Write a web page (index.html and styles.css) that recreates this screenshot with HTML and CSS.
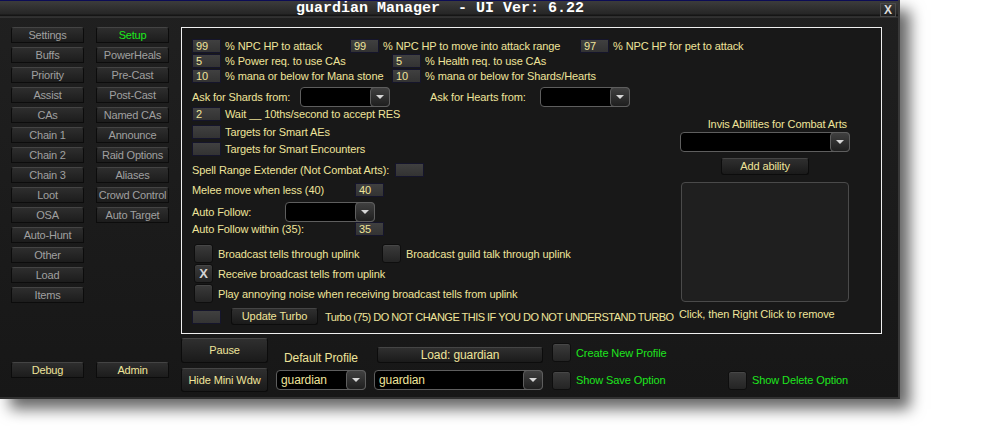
FILE: index.html
```html
<!DOCTYPE html>
<html lang="en">
<head>
    <meta charset="UTF-8">
    <title>guardian Manager</title>
    <link rel="stylesheet" href="styles.css">
</head>
<body>

    <div class="window">
        <!-- Title bar -->
        <div class="titlebar">
            <span class="title">guardian Manager  - UI Ver: 6.22</span>
            <span class="close">X</span>
        </div>

        <div class="window-body">
            <!-- Tabs -->
            <div class="sidebar">
                <div class="nav">
                    <a class="tab">Settings</a>
                    <a class="tab">Buffs</a>
                    <a class="tab">Priority</a>
                    <a class="tab">Assist</a>
                    <a class="tab">CAs</a>
                    <a class="tab">Chain 1</a>
                    <a class="tab">Chain 2</a>
                    <a class="tab">Chain 3</a>
                    <a class="tab">Loot</a>
                    <a class="tab">OSA</a>
                    <a class="tab">Auto-Hunt</a>
                    <a class="tab">Other</a>
                    <a class="tab">Load</a>
                    <a class="tab">Items</a>
                    <a class="tab active">Setup</a>
                    <a class="tab">PowerHeals</a>
                    <a class="tab">Pre-Cast</a>
                    <a class="tab">Post-Cast</a>
                    <a class="tab">Named CAs</a>
                    <a class="tab">Announce</a>
                    <a class="tab">Raid Options</a>
                    <a class="tab">Aliases</a>
                    <a class="tab">Crowd Control</a>
                    <a class="tab">Auto Target</a>
                </div>
                <div class="nav nav-bottom">
                    <a class="tab gold">Debug</a>
                    <a class="tab gold">Admin</a>
                </div>
            </div>

            <div class="main">
                <!-- Setup panel -->
                <div class="panel">
                    <div class="row full">
                        <div class="group g-first"><span class="num">99</span>% NPC HP to attack</div>
                        <div class="group g-second"><span class="num">99</span>% NPC HP to move into attack range</div>
                        <div class="group"><span class="num">97</span>% NPC HP for pet to attack</div>
                    </div>
                    <div class="row full">
                        <div class="group g-half"><span class="num">5</span>% Power req. to use CAs</div>
                        <div class="group"><span class="num">5</span>% Health req. to use CAs</div>
                    </div>
                    <div class="row full">
                        <div class="group g-half"><span class="num">10</span>% mana or below for Mana stone</div>
                        <div class="group"><span class="num">10</span>% mana or below for Shards/Hearts</div>
                    </div>
                    <div class="row full">
                        <span class="label l-shards">Ask for Shards from:</span>
                        <div class="select"><span class="value"></span><span class="arrow"></span></div>
                        <span class="label l-hearts">Ask for Hearts from:</span>
                        <div class="select"><span class="value"></span><span class="arrow"></span></div>
                    </div>
                    <div class="row"><span class="num">2</span>Wait __ 10ths/second to accept RES</div>
                    <div class="row"><span class="num"></span>Targets for Smart AEs</div>
                    <div class="row"><span class="num"></span>Targets for Smart Encounters</div>
                    <div class="row"><span class="label l-spell">Spell Range Extender (Not Combat Arts):</span><span class="num"></span></div>
                    <div class="row"><span class="label l-melee">Melee move when less (40)</span><span class="num">40</span></div>
                    <div class="row">
                        <span class="label l-follow">Auto Follow:</span>
                        <div class="select"><span class="value"></span><span class="arrow"></span></div>
                    </div>
                    <div class="row"><span class="label l-melee">Auto Follow within (35):</span><span class="num">35</span></div>
                    <div class="row checks">
                        <div class="group g-check"><span class="check"></span>Broadcast tells through uplink</div>
                        <div class="group"><span class="check"></span>Broadcast guild talk through uplink</div>
                    </div>
                    <div class="row checks"><span class="check">X</span>Receive broadcast tells from uplink</div>
                    <div class="row checks"><span class="check"></span>Play annoying noise when receiving broadcast tells from uplink</div>
                    <div class="row">
                        <span class="num"></span>
                        <span class="btn turbo-btn">Update Turbo</span>
                        <span class="turbo-text">Turbo (75) DO NOT CHANGE THIS IF YOU DO NOT UNDERSTAND TURBO</span>
                    </div>

                    <!-- Invis abilities -->
                    <div class="side">
                        <div class="side-label">Invis Abilities for Combat Arts</div>
                        <div class="select wide"><span class="value"></span><span class="arrow"></span></div>
                        <span class="btn add-btn">Add ability</span>
                        <div class="listbox"></div>
                        <div class="side-note">Click, then Right Click to remove</div>
                    </div>
                </div>

                <!-- Profile controls -->
                <div class="profile">
                    <span class="btn big">Pause</span>
                    <span class="profile-label">Default Profile</span>
                    <span class="btn load-btn">Load: guardian</span>
                    <div class="option opt-top"><span class="check"></span>Create New Profile</div>
                    <span></span>

                    <span class="btn big">Hide Mini Wdw</span>
                    <div class="select"><span class="value">guardian</span><span class="arrow"></span></div>
                    <div class="select"><span class="value">guardian</span><span class="arrow"></span></div>
                    <div class="option"><span class="check"></span>Show Save Option</div>
                    <div class="option"><span class="check"></span>Show Delete Option</div>
                </div>
            </div>
        </div>
    </div>

</body>
</html>
```

FILE: styles.css
```css
* {
    box-sizing: border-box;
}

html, body {
    background: #ffffff;
}

body {
    margin: 0;
    height: 440px;
    font-family: 'Liberation Sans', Arial, sans-serif;
    font-size: 11px;
    letter-spacing: -0.1px;
}

/* Window frame */
.window {
    position: relative;
    width: 900px;
    height: 399px;
    display: flex;
    flex-direction: column;
    background: linear-gradient(to bottom, #202020, #171717);
    border-right: 2px solid #383838;
    border-bottom: 2px solid #303030;
    box-shadow: 10px 10px 14px rgba(0, 0, 0, 0.6);
}

.titlebar {
    height: 18px;
    display: flex;
    align-items: flex-start;
    border-top: 1px solid #0c0c55;
    background: linear-gradient(to bottom, #3c3c3c 0px, #262626 13px, #151515 14px, #151515 15px, #474747 16px, #1c1c1c 17px);
}

.title {
    flex: 1;
    text-align: center;
    color: #ffffff;
    font-family: 'Liberation Mono', monospace;
    font-weight: bold;
    font-size: 15px;
    line-height: 15px;
    letter-spacing: 0;
    white-space: pre;
}

.close {
    width: 16px;
    height: 14px;
    margin: 2px 2px 0 0;
    border: 1px solid #4a4a4a;
    background: linear-gradient(to bottom, #3a3a3a, #1e1e1e);
    color: #dcdcdc;
    font-size: 12px;
    font-weight: bold;
    line-height: 12px;
    text-align: center;
    letter-spacing: 0;
}

.window-body {
    flex: 1;
    display: flex;
    gap: 12px;
    padding: 9px 16px 0 11px;
}

/* Tabs */
.sidebar {
    width: 158px;
    display: flex;
    flex-direction: column;
}

.nav {
    display: grid;
    grid-template-columns: 73px 73px;
    grid-template-rows: repeat(14, 16px);
    grid-auto-flow: column;
    column-gap: 12px;
    row-gap: 4px;
}

.nav-bottom {
    grid-template-rows: 16px;
    margin-top: auto;
    margin-bottom: 19px;
}

.tab {
    height: 16px;
    line-height: 15px;
    text-align: center;
    color: #a0a0a0;
    background: linear-gradient(to bottom, #2e2e2e, #1c1c1c);
    border: 1px solid #0c0c0c;
    border-top-color: #444444;
    border-radius: 3px 3px 0 0;
    white-space: nowrap;
    letter-spacing: -0.2px;
}

.tab.active {
    color: #1cea1c;
}

.tab.gold {
    color: #efe49a;
}

/* Main panel */
.main {
    width: 701px;
}

.panel {
    height: 307px;
    border: 1px solid #f0f0f0;
    padding: 11px 31px 0 10px;
    display: grid;
    grid-template-columns: 488px 170px;
    grid-template-rows: 14px 15px 15px 24px 14px 18px 17px 21px 20px 25px 14px 27px 20px 20px 22px;
    align-items: end;
    color: #efe49a;
    background: #181818;
}

.row {
    grid-column: 1;
    display: flex;
    align-items: center;
    white-space: nowrap;
}

.row.full {
    grid-column: 1 / -1;
}

.row.checks {
    padding-left: 2px;
}

.group {
    display: flex;
    align-items: center;
    flex: none;
}

.g-first { width: 158px; }
.g-second { width: 230px; }
.g-half { width: 200px; }
.g-check { width: 188px; }

.label {
    flex: none;
}

.l-shards { width: 108px; }
.l-hearts { width: 110px; margin-left: 40px; }
.l-spell { width: 203px; }
.l-melee { width: 163px; }
.l-follow { width: 93px; }

.num {
    flex: none;
    width: 29px;
    height: 14px;
    margin-right: 4px;
    padding-left: 3px;
    line-height: 12px;
    color: #efe49a;
    background: linear-gradient(to bottom, #404040, #333333);
    border: 1px solid #15152b;
}

.select {
    flex: none;
    width: 90px;
    height: 20px;
    display: flex;
    background: #000000;
    border: 1px solid #5e5e5e;
    border-radius: 4px;
    color: #efe49a;
}

.select .value {
    flex: 1;
    padding-left: 4px;
    line-height: 18px;
    font-size: 12px;
}

.select .arrow {
    width: 20px;
    margin: -1px -1px -1px 0;
    display: flex;
    align-items: center;
    justify-content: center;
    background: linear-gradient(to bottom, #404040, #1f1f1f);
    border: 1px solid #5e5e5e;
    border-radius: 4px;
}

.select .arrow::after {
    content: "";
    border-left: 4px solid transparent;
    border-right: 4px solid transparent;
    border-top: 4px solid #d6d6d6;
}

.check {
    flex: none;
    width: 19px;
    height: 19px;
    margin-right: 5px;
    border: 1px solid #0e0e0e;
    border-radius: 3px;
    background: linear-gradient(to bottom, #3b3b3b, #242424);
    box-shadow: inset 0 1px #474747;
    color: #d4d4d4;
    font-size: 13px;
    font-weight: bold;
    line-height: 17px;
    text-align: center;
}

.btn {
    display: block;
    text-align: center;
    color: #efe49a;
    background: linear-gradient(to bottom, #2f2f2f, #1a1a1a);
    border: 1px solid #0c0c0c;
    border-top-color: #454545;
    border-radius: 3px;
    white-space: nowrap;
}

.turbo-btn {
    width: 87px;
    height: 17px;
    line-height: 15px;
    margin-left: 6px;
}

.turbo-text {
    margin-left: 7px;
    letter-spacing: -0.52px;
}

/* Invis abilities column */
.side {
    grid-column: 2;
    grid-row: 5 / 16;
    align-self: start;
    display: flex;
    flex-direction: column;
}

.side-label {
    margin-top: 11px;
    padding-right: 3px;
    line-height: 12px;
    text-align: right;
}

.select.wide {
    width: 170px;
    margin-top: 2px;
}

.add-btn {
    width: 88px;
    height: 17px;
    line-height: 15px;
    margin: 6px auto 0;
}

.listbox {
    height: 120px;
    margin: 7px 1px 0;
    border: 1px solid #4a4a4a;
    border-radius: 4px;
    background: #1f1f1f;
}

.side-note {
    margin: 6px 0 0 -1px;
    line-height: 12px;
    white-space: nowrap;
}

/* Profile controls */
.profile {
    margin-top: 4px;
    display: grid;
    grid-template-columns: 87px 90px 169px 168px 1fr;
    grid-template-rows: 25px 24px;
    gap: 5px 8px;
    align-items: center;
    color: #efe49a;
}

.btn.big {
    height: 100%;
    line-height: 22px;
}

.profile-label {
    align-self: end;
    margin-bottom: -2px;
    padding-left: 8px;
    line-height: 14px;
    font-size: 12px;
}

.load-btn {
    align-self: end;
    height: 16px;
    line-height: 14px;
    margin-left: 3px;
    font-size: 12px;
}

.profile .select {
    width: auto;
}

.option {
    display: flex;
    align-items: center;
    margin-left: 1px;
    color: #1ee51e;
    white-space: nowrap;
}

.opt-top {
    align-self: end;
    margin-bottom: 1px;
}
```
